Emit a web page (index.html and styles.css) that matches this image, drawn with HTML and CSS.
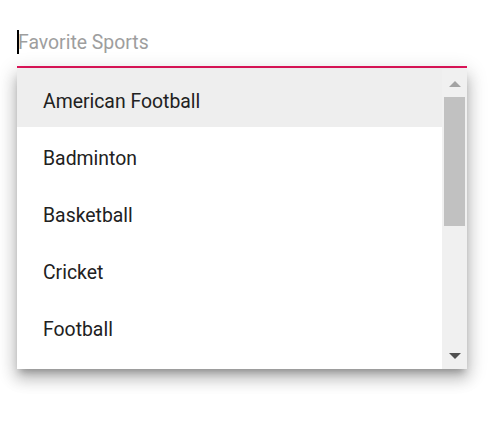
FILE: index.html
```html
<!DOCTYPE html>
<html>
<head>
<meta charset="utf-8">
<link rel="stylesheet" href="styles.css">
</head>
<body>
<div class="wrap">
  <div class="field">
    <span class="caret"></span>
    <span class="placeholder">Favorite Sports</span>
  </div>
  <div class="popup">
    <ul class="list">
      <li class="item active">American Football</li>
      <li class="item">Badminton</li>
      <li class="item">Basketball</li>
      <li class="item">Cricket</li>
      <li class="item">Football</li>
    </ul>
    <div class="scrollbar">
      <div class="arrow up"></div>
      <div class="track"><div class="thumb"></div></div>
      <div class="arrow down"></div>
    </div>
  </div>
</div>
</body>
</html>
```
FILE: styles.css
```css
html, body {
  margin: 0;
  padding: 0;
  background: #fff;
}
body {
  font-family: Roboto, "Liberation Sans", sans-serif;
  min-height: 436px;
}
.wrap {
  padding: 28px 29px 0 17px;
  width: 450px;
}
.field {
  height: 36px;
  border-bottom: 2px solid #e3165b;
  display: flex;
  align-items: flex-start;
  padding-top: 2px;
}
.caret {
  width: 2px;
  height: 24px;
  background: #000;
}
.placeholder {
  font-size: 19.4px;
  color: #9e9e9e;
  line-height: 24px;
  margin-left: -1px;
  margin-top: 1px;
}
.popup {
  margin-top: 1px;
  height: 300px;
  display: flex;
  background: #fff;
  box-shadow: 0 6px 7px -3px rgba(0,0,0,.25), 0 10px 14px 1px rgba(0,0,0,.16), 0 4px 18px 3px rgba(0,0,0,.14);
}
.list {
  list-style: none;
  margin: 0;
  padding: 0;
  flex: 1;
  overflow: hidden;
}
.item {
  box-sizing: border-box;
  height: 57px;
  padding-top: 6px;
  line-height: 51px;
  padding-left: 26px;
  font-size: 19.4px;
  color: #212121;
}
.item:first-child {
  height: 58px;
  padding-top: 0;
  line-height: 66px;
}
.item.active {
  background: #eeeeee;
}
.scrollbar {
  width: 25px;
  background: #f0f0f0;
  display: flex;
  flex-direction: column;
  align-items: center;
}
.arrow {
  width: 0;
  height: 0;
  border-left: 6px solid transparent;
  border-right: 6px solid transparent;
}
.arrow.up {
  border-bottom: 6px solid #a3a3a3;
  margin-top: 12px;
}
.arrow.down {
  border-top: 6px solid #505050;
  margin-bottom: 10px;
}
.track {
  flex: 1;
  width: 100%;
  padding: 10px 2px 0 2px;
  box-sizing: border-box;
}
.thumb {
  height: 129px;
  background: #c1c1c1;
}
```
